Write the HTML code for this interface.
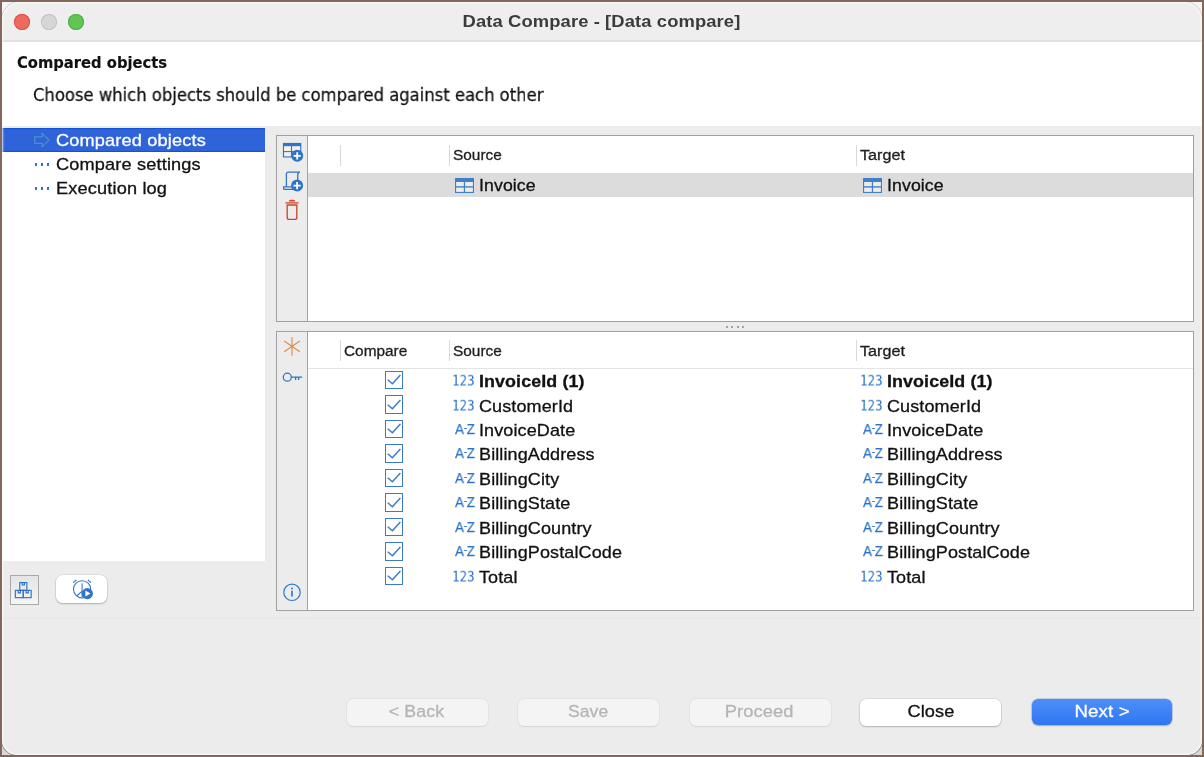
<!DOCTYPE html>
<html lang="en">
<head>
<meta charset="utf-8">
<title>Data Compare - [Data compare]</title>
<style>
*{box-sizing:border-box;margin:0;padding:0}
html,body{width:1204px;height:757px;overflow:hidden;background:#81675c}
body{position:relative;font-family:"Liberation Sans",sans-serif;color:#111}
.abs{position:absolute}
#title,#h1,#h2,.srow span,.hlab,.txt,.btn span,.i123,.iaz{will-change:transform}
.srow span,.txt,.btn span,.hlab{-webkit-text-stroke:.3px currentColor}
#h2{-webkit-text-stroke:.28px currentColor}
#h1{-webkit-text-stroke:.15px currentColor}
.iaz{-webkit-text-stroke:.25px currentColor}
#frame{position:absolute;left:2px;top:2px;width:1200px;height:753px;overflow:hidden;background:linear-gradient(#f6f6f6 0,#f6f6f6 50%,#d9d9d9 50%,#d9d9d9 100%)}
#win{position:absolute;left:0;top:0;width:1200px;height:753px;background:#ececec;overflow:hidden;border-radius:18px 18px 15px 15px}
.clip{position:absolute;left:0;width:1200px;height:40px;overflow:hidden}
.clip div{position:absolute;left:0;width:1200px;height:200px;border-radius:15px}
#gloss{position:absolute;left:0;top:0;width:1200px;height:753px;border-radius:18px 18px 15px 15px;box-shadow:inset 0 0 2px .8px rgba(255,255,255,.95);pointer-events:none}
#titlebar{position:absolute;left:0;top:0;width:1200px;height:40px;background:#eeeeee;border-bottom:2px solid #e1e1e1}
#title{position:absolute;left:0;top:9.5px;width:1200px;text-align:center;font-weight:bold;font-size:17px;letter-spacing:.1px;color:#3b3b3b;line-height:20px;white-space:nowrap;transform:translateX(-.5px) scaleX(1.081)}
.dot{position:absolute;top:11.7px;width:16px;height:16px;border-radius:50%}
#header{position:absolute;left:0;top:40px;width:1200px;height:84.3px;background:#fff}
#h1{position:absolute;left:15px;top:11px;font-family:"DejaVu Sans Condensed","DejaVu Sans",sans-serif;font-weight:bold;font-size:16.4px;line-height:20px;white-space:nowrap;color:#111}
#h2{position:absolute;left:30.5px;top:43px;font-family:"DejaVu Sans",sans-serif;font-size:17px;line-height:20px;white-space:nowrap;color:#111;transform-origin:0 50%;transform:scaleX(.9655)}
#side{position:absolute;left:0;top:126px;width:263px;height:433.3px;background:#fff}
.srow{position:absolute;left:0;width:263px;height:23.5px;font-size:17px;letter-spacing:.15px;line-height:24px;white-space:nowrap}
.srow span{position:absolute;left:54px;top:0;transform-origin:0 50%;transform:scaleX(1.068)}
.srow.sel{background:#2e63d9;color:#fff;box-shadow:inset 0 1px 0 #1350d3,inset 0 -1px 0 #1350d3}
.srow.sel span{top:1.2px}
.dots{position:absolute;left:33px;width:14px;height:2px}
.dots i{position:absolute;top:-.2px;width:2.4px;height:2.4px;background:#2a74cc;margin-left:-.2px}
.panel{position:absolute;left:274px;width:918px;background:#fff;border:1px solid #a0a0a0}
.tb{position:absolute;left:0;top:0;width:31px;height:100%;background:#ececec;border-right:1.2px solid #a3a3a3}
.hsep{position:absolute;width:1px;height:21.5px;background:#d9d9d9}
.hlab{position:absolute;font-size:15.4px;line-height:20px;color:#1d1d1d;white-space:nowrap;letter-spacing:0}
.txt{position:absolute;font-size:17px;letter-spacing:.1px;line-height:24px;white-space:nowrap;color:#111;transform-origin:0 50%;transform:scaleX(1.06)}
.txt.b{font-weight:bold;letter-spacing:.1px;transform:scaleX(1.05)}
.cb{position:absolute;width:18.4px;height:18.6px;border:1.45px solid #3a7ac8;background:#fff}
.cb svg{position:absolute;left:-1.45px;top:-1.45px}
.i123{position:absolute;font-family:"DejaVu Sans Mono","Liberation Mono",monospace;font-size:15px;line-height:24px;color:#2d74c8;white-space:nowrap;transform-origin:0 50%;transform:scale(.835,.89);letter-spacing:0;margin-top:-.3px;margin-left:-1.5px}
.iaz{position:absolute;font-size:14.6px;line-height:24px;color:#2d74c8;white-space:nowrap;transform-origin:0 50%;transform:scaleX(.92);margin-left:1.2px;margin-top:-2px}
.iaz i{font-style:normal;font-size:11px;margin:0 -.4px 0 -.2px;position:relative;top:-2.9px}
.btn{position:absolute;top:696.6px;width:141px;height:27.2px;border-radius:6px;font-size:17px;letter-spacing:.1px;line-height:27.5px;text-align:center;white-space:nowrap}
.btn span{display:inline-block;position:relative;top:-1px;transform:scaleX(1.07)}
.btn.dis{background:#f4f4f4;color:#b5b5b5;box-shadow:0 0 0 .5px rgba(0,0,0,.05),0 .8px 1.5px rgba(0,0,0,.07)}
.btn.norm{background:#fff;color:#111;box-shadow:0 0 0 .5px rgba(0,0,0,.12),0 1px 2px rgba(0,0,0,.20)}
.btn.prim{width:140.8px;height:26.4px;top:697px;line-height:27.3px;background:linear-gradient(#4d8ef8,#2f76f2);color:#fff;box-shadow:0 0 0 .5px rgba(20,80,200,.35),0 1px 2px rgba(0,0,0,.18)}
</style>
</head>
<body>
<div id="frame">
<div class="clip" style="top:0"><div style="top:0;border-radius:18px;box-shadow:0 0 0 1px #cdcdcd"></div></div>
<div class="clip" style="bottom:0"><div style="bottom:0;box-shadow:0 0 0 1px #949494"></div></div>
<div id="win">
  <div id="titlebar">
    <div class="dot" style="left:11.8px;background:#ec6a5e;box-shadow:inset 0 0 0 .9px #e0503f"></div>
    <div class="dot" style="left:38.8px;background:#d6d6d6;box-shadow:inset 0 0 0 .9px #c2c2c2"></div>
    <div class="dot" style="left:66px;background:#61c455;box-shadow:inset 0 0 0 .9px #4eb146"></div>
    <div id="title">Data Compare - [Data compare]</div>
  </div>
  <div id="header">
    <div id="h1">Compared objects</div>
    <div id="h2">Choose which objects should be compared against each other</div>
  </div>
  <div id="side">
    <div class="srow sel" style="top:-.2px;height:23.8px"><svg class="abs" style="left:31px;top:3.5px" width="18" height="17" viewBox="0 0 18 17"><path d="M1.7 5.9 H9.2 V2.4 L15.9 9.1 L9.2 15.8 V12.3 H1.7 Z" fill="none" stroke="#4f90cc" stroke-width="1.2" stroke-linejoin="miter"/></svg><span>Compared objects</span></div>
    <div class="srow" style="top:25px"><div class="dots" style="top:10.3px"><i style="left:0"></i><i style="left:6px"></i><i style="left:12px"></i></div><span>Compare settings</span></div>
    <div class="srow" style="top:49px"><div class="dots" style="top:10.4px"><i style="left:0"></i><i style="left:6px"></i><i style="left:12px"></i></div><span>Execution log</span></div>
  </div>

  <div class="abs" style="left:0;top:616px;width:1200px;height:1px;background:#e6e6e6"></div>
  <!-- bottom-left buttons -->
  <div class="abs" style="left:8px;top:573px;width:29px;height:29.5px;border:1.3px solid #a9a9a9;background:linear-gradient(#e4e4e4,#f6f6f6)">
    <svg class="abs" style="left:3px;top:5px" width="20" height="19" viewBox="0 0 20 19"><g fill="none" stroke="#2f74c6" stroke-width="1.15"><rect x="5.75" y="1.55" width="7.1" height="7.8"/><rect x="1.35" y="9.35" width="7.9" height="7.3"/><rect x="9.25" y="9.35" width="7.9" height="7.3"/><path d="M8.2 1.6 v2.4 h2.2 V1.6 M4.2 9.4 v2.4 h2.2 V9.4 M12.1 9.4 v2.4 h2.2 V9.4"/></g></svg>
  </div>
  <div class="abs" style="left:53.5px;top:572.5px;width:51.2px;height:28px;border-radius:6.5px;background:#fff;box-shadow:0 0 0 .5px rgba(0,0,0,.10),0 1px 2px rgba(0,0,0,.22)">
    <svg class="abs" style="left:14px;top:2px" width="26" height="26" viewBox="0 0 26 26"><g fill="none" stroke="#2f74c6" stroke-width="1.05"><circle cx="12.1" cy="12.3" r="8.6"/><path d="M12.1 6.3 V20.6 M12.1 14.2 L6.6 19"/><path d="M3.2 5.6 L6.4 3 M21 5.6 L17.8 3"/></g><circle cx="17.3" cy="16.6" r="5.6" fill="#2f74c6"/><path d="M15.4 13.6 L20.4 16.6 L15.4 19.6 Z" fill="#fff"/></svg>
  </div>

  <!-- top panel : inner origin abs (277,136) -->
  <div class="panel" id="p1" style="top:133px;height:186.9px">
    <div class="tb"></div>
    <!-- add table -->
    <svg class="abs" style="left:5px;top:6px" width="22" height="22" viewBox="0 0 22 22"><rect x="0.9" y="0.9" width="18.4" height="14.6" fill="#2f74c6"/><rect x="2.05" y="4.2" width="6.9" height="4.85" fill="#f4f2ee"/><rect x="10.05" y="4.2" width="8.1" height="4.85" fill="#f4f2ee"/><rect x="2.05" y="10.15" width="6.9" height="4.25" fill="#f4f2ee"/><rect x="10.05" y="10.15" width="8.1" height="4.25" fill="#f4f2ee"/><circle cx="15.2" cy="13.8" r="6" fill="#2f74c6"/><path d="M15.2 10.2 V17.4 M11.6 13.8 H18.8" stroke="#fff" stroke-width="1.8" fill="none"/></svg>
    <!-- add script -->
    <svg class="abs" style="left:5px;top:34px" width="22" height="22" viewBox="0 0 22 22"><g fill="none" stroke="#2f74c6" stroke-width="1.3"><path d="M18 2.2 H6.2 Q4.4 2.2 4.4 4 V16.6 M18 2.2 Q15.8 2.4 15.8 4.6 V10"/><path d="M1.6 16.8 H13 V19.4 H2.8 Q1.6 19.4 1.6 18.2 Z"/></g><circle cx="15.1" cy="15.6" r="6" fill="#2f74c6"/><path d="M15.1 12 V19.2 M11.5 15.6 H18.7" stroke="#fff" stroke-width="1.8" fill="none"/></svg>
    <!-- trash -->
    <svg class="abs" style="left:7px;top:63px" width="18" height="22" viewBox="0 0 18 22"><g fill="none" stroke="#c9472c" stroke-width="1.35"><path d="M1.4 3.8 H14.6"/><path d="M5.6 2.6 Q5.6 1.6 6.6 1.6 H9.4 Q10.4 1.6 10.4 2.6" stroke-width="1.6"/><path d="M3.2 6 V18.4 Q3.2 20.4 5.2 20.4 H10.8 Q12.8 20.4 12.8 18.4 V6 Z"/></g></svg>
    <div class="hsep" style="left:63px;top:8.5px"></div>
    <div class="hsep" style="left:172px;top:8.5px"></div>
    <div class="hsep" style="left:579px;top:8.5px"></div>
    <div class="hlab" style="left:176px;top:8.5px">Source</div>
    <div class="hlab" style="left:583px;top:8.5px;transform-origin:0 50%;transform:scaleX(1.05)">Target</div>
    <div class="abs" style="left:31.2px;top:37px;width:884.8px;height:23.9px;background:#dcdcdc"></div>
    <svg class="abs" style="left:178px;top:42px" width="19" height="15" viewBox="0 0 19 15"><rect x="0" y="0" width="19" height="15" fill="#3f80c9"/><rect x="1.1" y="4" width="7.7" height="4.2" fill="#efece6"/><rect x="10.1" y="4" width="7.8" height="4.2" fill="#efece6"/><rect x="1.1" y="9.6" width="7.7" height="4.3" fill="#efece6"/><rect x="10.1" y="9.6" width="7.8" height="4.3" fill="#efece6"/></svg>
    <div class="txt" style="left:201.5px;top:38px;transform:scaleX(1.04)">Invoice</div>
    <svg class="abs" style="left:586px;top:42px" width="19" height="15" viewBox="0 0 19 15"><rect x="0" y="0" width="19" height="15" fill="#3f80c9"/><rect x="1.1" y="4" width="7.7" height="4.2" fill="#efece6"/><rect x="10.1" y="4" width="7.8" height="4.2" fill="#efece6"/><rect x="1.1" y="9.6" width="7.7" height="4.3" fill="#efece6"/><rect x="10.1" y="9.6" width="7.8" height="4.3" fill="#efece6"/></svg>
    <div class="txt" style="left:609.5px;top:38px;transform:scaleX(1.04)">Invoice</div>
  </div>

  <!-- splitter grip -->
  <div class="abs" style="left:724px;top:323.5px;width:20px;height:2px">
    <i class="abs" style="left:-.3px;top:0;width:2px;height:2px;background:#a4a4a4"></i><i class="abs" style="left:5.2px;top:0;width:2px;height:2px;background:#a4a4a4"></i><i class="abs" style="left:10.5px;top:0;width:2px;height:2px;background:#a4a4a4"></i><i class="abs" style="left:16px;top:0;width:2px;height:2px;background:#a4a4a4"></i>
  </div>

  <!-- bottom panel : inner origin abs (277,332) -->
  <div class="panel" id="p2" style="top:328.5px;height:280.9px;border-top-width:1.5px">
    <div class="tb"></div>
    <svg class="abs" style="left:5px;top:3px" width="20" height="22" viewBox="0 0 20 22"><path d="M10 2.2 V20.8 M2.2 6 L17.8 16.8 M17.8 6 L2.2 16.8" fill="none" stroke="#e08c50" stroke-width="1.15"/></svg>
    <svg class="abs" style="left:4px;top:38.5px" width="24" height="14" viewBox="0 0 24 14"><g fill="none" stroke="#2f74c6" stroke-width="1.3"><circle cx="6.3" cy="7.2" r="4"/><path d="M10.3 7.2 H21.2 M14.6 7.2 V10 M17.6 7.2 V10"/></g></svg>
    <svg class="abs" style="left:5px;top:250px" width="20" height="20" viewBox="0 0 20 20"><circle cx="10" cy="10.3" r="8.2" fill="none" stroke="#2f7bd0" stroke-width="1.2"/><path d="M10 8.8 V14.6" stroke="#2f7bd0" stroke-width="1.7" fill="none"/><circle cx="10" cy="6.4" r="1" fill="#2f7bd0"/></svg>
    <div class="hsep" style="left:63px;top:8px"></div>
    <div class="hsep" style="left:172px;top:8px"></div>
    <div class="hsep" style="left:579px;top:8px"></div>
    <div class="hlab" style="left:67px;top:9.5px">Compare</div>
    <div class="hlab" style="left:176px;top:9.5px">Source</div>
    <div class="hlab" style="left:583px;top:9.5px;transform-origin:0 50%;transform:scaleX(1.05)">Target</div>
    <div class="abs" style="left:31.2px;top:36px;width:884.8px;height:1.4px;background:#e4e4e4"></div>
    <div class="cb" style="left:108px;top:39.1px"><svg width="18" height="18" viewBox="0 0 18 18"><path d="M2.7 9.7 L7.4 13.8 L15.4 4.9" fill="none" stroke="#3a7ac8" stroke-width="1.45"/></svg></div>
    <span class="i123" style="left:176.5px;top:38px">123</span><div class="txt b" style="left:202px;top:38px">InvoiceId (1)</div>
    <span class="i123" style="left:584.5px;top:38px">123</span><div class="txt b" style="left:610px;top:38px">InvoiceId (1)</div>
    <div class="cb" style="left:108px;top:63.6px"><svg width="18" height="18" viewBox="0 0 18 18"><path d="M2.7 9.7 L7.4 13.8 L15.4 4.9" fill="none" stroke="#3a7ac8" stroke-width="1.45"/></svg></div>
    <span class="i123" style="left:176.5px;top:63px">123</span><div class="txt" style="left:202px;top:63px">CustomerId</div>
    <span class="i123" style="left:584.5px;top:63px">123</span><div class="txt" style="left:610px;top:63px">CustomerId</div>
    <div class="cb" style="left:108px;top:88.1px"><svg width="18" height="18" viewBox="0 0 18 18"><path d="M2.7 9.7 L7.4 13.8 L15.4 4.9" fill="none" stroke="#3a7ac8" stroke-width="1.45"/></svg></div>
    <span class="iaz" style="left:176.5px;top:87px">A<i>-</i>Z</span><div class="txt" style="left:202px;top:87px">InvoiceDate</div>
    <span class="iaz" style="left:584.5px;top:87px">A<i>-</i>Z</span><div class="txt" style="left:610px;top:87px">InvoiceDate</div>
    <div class="cb" style="left:108px;top:112.6px"><svg width="18" height="18" viewBox="0 0 18 18"><path d="M2.7 9.7 L7.4 13.8 L15.4 4.9" fill="none" stroke="#3a7ac8" stroke-width="1.45"/></svg></div>
    <span class="iaz" style="left:176.5px;top:111px">A<i>-</i>Z</span><div class="txt" style="left:202px;top:111px">BillingAddress</div>
    <span class="iaz" style="left:584.5px;top:111px">A<i>-</i>Z</span><div class="txt" style="left:610px;top:111px">BillingAddress</div>
    <div class="cb" style="left:108px;top:137.1px"><svg width="18" height="18" viewBox="0 0 18 18"><path d="M2.7 9.7 L7.4 13.8 L15.4 4.9" fill="none" stroke="#3a7ac8" stroke-width="1.45"/></svg></div>
    <span class="iaz" style="left:176.5px;top:136px">A<i>-</i>Z</span><div class="txt" style="left:202px;top:136px">BillingCity</div>
    <span class="iaz" style="left:584.5px;top:136px">A<i>-</i>Z</span><div class="txt" style="left:610px;top:136px">BillingCity</div>
    <div class="cb" style="left:108px;top:161.6px"><svg width="18" height="18" viewBox="0 0 18 18"><path d="M2.7 9.7 L7.4 13.8 L15.4 4.9" fill="none" stroke="#3a7ac8" stroke-width="1.45"/></svg></div>
    <span class="iaz" style="left:176.5px;top:160px">A<i>-</i>Z</span><div class="txt" style="left:202px;top:160px">BillingState</div>
    <span class="iaz" style="left:584.5px;top:160px">A<i>-</i>Z</span><div class="txt" style="left:610px;top:160px">BillingState</div>
    <div class="cb" style="left:108px;top:186.1px"><svg width="18" height="18" viewBox="0 0 18 18"><path d="M2.7 9.7 L7.4 13.8 L15.4 4.9" fill="none" stroke="#3a7ac8" stroke-width="1.45"/></svg></div>
    <span class="iaz" style="left:176.5px;top:185px">A<i>-</i>Z</span><div class="txt" style="left:202px;top:185px">BillingCountry</div>
    <span class="iaz" style="left:584.5px;top:185px">A<i>-</i>Z</span><div class="txt" style="left:610px;top:185px">BillingCountry</div>
    <div class="cb" style="left:108px;top:210.6px"><svg width="18" height="18" viewBox="0 0 18 18"><path d="M2.7 9.7 L7.4 13.8 L15.4 4.9" fill="none" stroke="#3a7ac8" stroke-width="1.45"/></svg></div>
    <span class="iaz" style="left:176.5px;top:209px">A<i>-</i>Z</span><div class="txt" style="left:202px;top:209px">BillingPostalCode</div>
    <span class="iaz" style="left:584.5px;top:209px">A<i>-</i>Z</span><div class="txt" style="left:610px;top:209px">BillingPostalCode</div>
    <div class="cb" style="left:108px;top:235.1px"><svg width="18" height="18" viewBox="0 0 18 18"><path d="M2.7 9.7 L7.4 13.8 L15.4 4.9" fill="none" stroke="#3a7ac8" stroke-width="1.45"/></svg></div>
    <span class="i123" style="left:176.5px;top:234px">123</span><div class="txt" style="left:202px;top:234px">Total</div>
    <span class="i123" style="left:584.5px;top:234px">123</span><div class="txt" style="left:610px;top:234px">Total</div>
  </div>

  <div class="btn dis" style="left:344.9px"><span style="transform:translateX(-1px) scaleX(1.045)">&lt; Back</span></div>
  <div class="btn dis" style="left:516px"><span style="transform:translateX(-.5px) scaleX(1.03)">Save</span></div>
  <div class="btn dis" style="left:687.5px"><span style="transform:translateX(-.8px) scaleX(1.075)">Proceed</span></div>
  <div class="btn norm" style="left:858.3px"><span>Close</span></div>
  <div class="btn prim" style="left:1029.7px"><span style="transform:scaleX(1.1)">Next &gt;</span></div>
  <div id="gloss"></div>
</div>
</div>
</body>
</html>
